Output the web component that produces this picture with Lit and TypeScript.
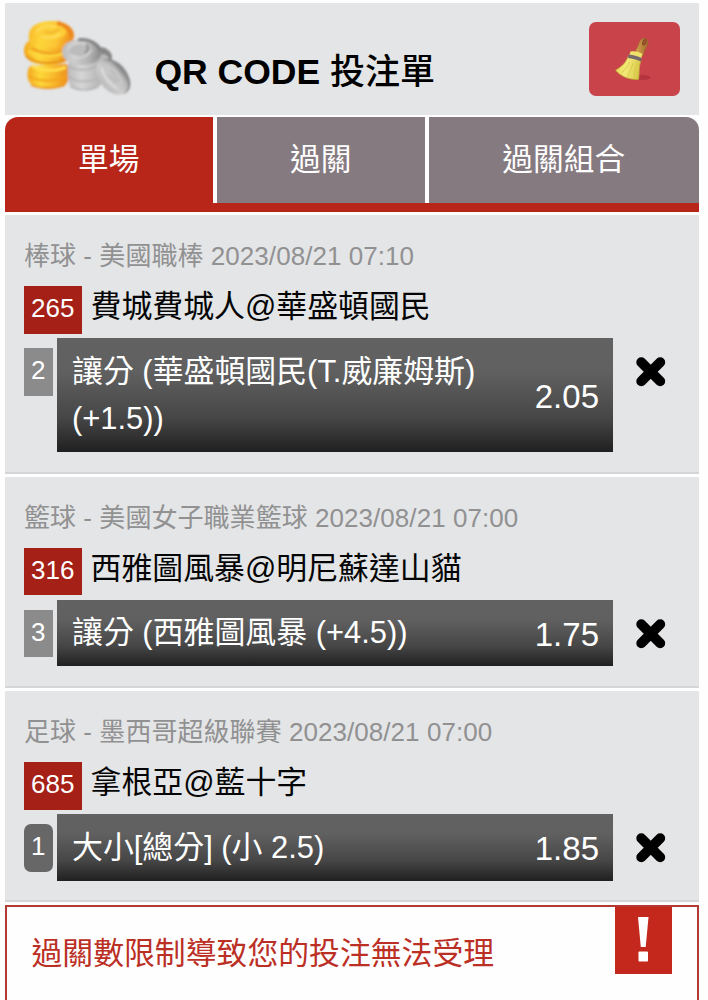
import { LitElement, html, css, nothing } from "lit";
import { customElement, property } from "lit/decorators.js";

interface Bet {
  league: string;
  code: string;
  teams: string;
  mark: string;
  rounded?: boolean;
  pick: string[];
  odds: string;
}

const BETS: Bet[] = [
  { league: "棒球 - 美國職棒 2023/08/21 07:10", code: "265", teams: "費城費城人@華盛頓國民", mark: "2", pick: ["讓分 (華盛頓國民(T.威廉姆斯)", "(+1.5))"], odds: "2.05" },
  { league: "籃球 - 美國女子職業籃球 2023/08/21 07:00", code: "316", teams: "西雅圖風暴@明尼蘇達山貓", mark: "3", pick: ["讓分 (西雅圖風暴 (+4.5))"], odds: "1.75" },
  { league: "足球 - 墨西哥超級聯賽 2023/08/21 07:00", code: "685", teams: "拿根亞@藍十字", mark: "1", rounded: true, pick: ["大小[總分] (小 2.5)"], odds: "1.85" },
];

const coins = html`<svg width="110" height="80" viewBox="0 0 110 80" aria-hidden="true">
  <defs>
    <linearGradient id="goldTop" x1="0" y1=".2" x2="1" y2=".3">
      <stop offset="0" stop-color="#f9b828"/><stop offset=".3" stop-color="#fdd53a"/><stop offset=".65" stop-color="#fbc634"/><stop offset="1" stop-color="#ee8a1a"/>
    </linearGradient>
    <linearGradient id="goldEdge" x1="0" y1="0" x2="1" y2="0">
      <stop offset="0" stop-color="#f4a61e"/><stop offset=".3" stop-color="#fdd83a"/><stop offset=".65" stop-color="#f8b62a"/><stop offset="1" stop-color="#ec8c1c"/>
    </linearGradient>
    <linearGradient id="silverTop" x1="0" y1=".3" x2="1" y2=".4">
      <stop offset="0" stop-color="#bdbdbd"/><stop offset=".35" stop-color="#cecece"/><stop offset=".7" stop-color="#b4b4b4"/><stop offset="1" stop-color="#8a8a8a"/>
    </linearGradient>
    <linearGradient id="silverEdge" x1="0" y1="0" x2="1" y2="0">
      <stop offset="0" stop-color="#bcbcbc"/><stop offset=".4" stop-color="#d6d6d6"/><stop offset="1" stop-color="#b2b2b2"/>
    </linearGradient>
    <linearGradient id="silverLean" x1="0" y1="0" x2="0" y2="1">
      <stop offset="0" stop-color="#8c8c8c"/><stop offset=".2" stop-color="#b6b6b6"/><stop offset=".6" stop-color="#cecece"/><stop offset="1" stop-color="#bababa"/>
    </linearGradient>
    <filter id="soft" x="-10%" y="-10%" width="120%" height="120%"><feGaussianBlur stdDeviation=".8"/></filter>
  </defs>
  <g filter="url(#soft)">
    <path d="M7 47C3 52 4 62 8 65c9 5 25 5 34 1 5-4 5-15 2-21z" fill="url(#goldEdge)"/>
    <path d="M6 57c9 6 28 6 38 0" fill="none" stroke="#f2a41e" stroke-width="2"/>
    <path d="M9 47c8 5 25 6 34 1" fill="none" stroke="#ffe04e" stroke-width="3"/>
    <path d="M8 66c9 4 25 4 34 0" fill="none" stroke="#ec941c" stroke-width="1.800"/>
    <path d="M7 21C1 24-1 33 3 38c4 6 12 8 22 8 9 0 17-2 21-6l3-18z" fill="url(#goldEdge)"/>
    <path d="M3 37c10 9 30 9 43 2" fill="none" stroke="#e68d16" stroke-width="2"/>
    <path d="M9 29c10 7 27 7 38 0" fill="none" stroke="#ef9c20" stroke-width="2.200"/>
    <path d="M5 32c9 6 25 7 36 2" fill="none" stroke="#ffda3f" stroke-width="2"/>
    <path d="M6 15C7 6 17 2 29 2s22 6 22 14c0 4-2 8-6 10-9 4-26 4-34 0-4-2-6-6-5-11z" fill="url(#goldTop)"/>
    <path d="M34 4c9 2 15 7 14 13" fill="none" stroke="#ee861c" stroke-width="4"/>
    <ellipse cx="27" cy="13" rx="16" ry="7.500" fill="#fccd39"/>
    <path d="M14 13c3-6 13-7 19-5M18 17c6 3 15 2 19-3" fill="none" stroke="#ffe465" stroke-width="1.500"/>
    <path d="M22 14c3-3 6 2 9-1s5-1 6-3" fill="none" stroke="#efad28" stroke-width="1.500"/>
    <path d="M46 42c-2 7-2 18 1 24 8 6 22 6 30 1 3-6 2-18-1-24z" fill="url(#silverEdge)"/>
    <path d="M45 47c8 5 20 5 29 0M46 58c9 6 20 5 30 1" fill="none" stroke="#b4b4b4" stroke-width="1.800"/>
    <path d="M47 67c8 5 20 5 28 1" fill="none" stroke="#b2b2b2" stroke-width="1.500"/>
    <ellipse cx="81" cy="35.500" rx="9" ry="6" fill="#858585" transform="rotate(35 81 35.5)"/>
    <ellipse cx="78" cy="40" rx="8" ry="5" fill="#b9b9b9"/>
    <path d="M39 33c0-8 9-13 20-13 12 0 20 6 20 13-1 8-9 13-20 13-11-1-19-4-20-13z" fill="url(#silverTop)"/>
    <path d="M55 21c11-2 20 4 22 11" fill="none" stroke="#828282" stroke-width="3"/>
    <ellipse cx="58" cy="31" rx="12" ry="6" fill="#bcbcbc"/>
    <path d="M45 31c2-7 12-8 18-5M48 37c8 3 17 1 19-5" fill="none" stroke="#d8d8d8" stroke-width="1.500"/>
    <path d="M63 26c3 2 3 5-1 8" fill="none" stroke="#929292" stroke-width="2.500"/>
    <ellipse cx="91.500" cy="57.500" rx="20" ry="12.500" fill="#858585" transform="rotate(52 91.5 57.5)"/>
    <ellipse cx="89" cy="58.500" rx="20" ry="12.500" fill="url(#silverLean)" transform="rotate(50 89 58.5)"/>
    <ellipse cx="89.500" cy="57" rx="14" ry="7" fill="#c7c7c7" transform="rotate(50 89.5 57)"/>
    <path d="M79 49c1 8 8 17 15 20" fill="none" stroke="#dedede" stroke-width="2"/>
    <path d="M88 50l8 13M86 56l7 7" stroke="#b3b3b3" stroke-width="1.300"/>
  </g>
</svg>`;

const broom = html`<svg width="40" height="48" viewBox="0 0 40 48" aria-hidden="true">
  <defs>
    <linearGradient id="straw" x1="0" y1="0" x2="1" y2=".2">
      <stop offset="0" stop-color="#e6d850"/><stop offset=".5" stop-color="#f3e978"/><stop offset="1" stop-color="#d9c94a"/>
    </linearGradient>
    <linearGradient id="wood" x1="0" y1="0" x2="1" y2="0">
      <stop offset="0" stop-color="#d8a450"/><stop offset="1" stop-color="#a36b30"/>
    </linearGradient>
    <filter id="blend"><feGaussianBlur stdDeviation=".35"/></filter>
  </defs>
  <g filter="url(#blend)">
  <ellipse cx="26" cy="42.500" rx="11" ry="2.800" fill="#a52c36" opacity=".55"/>
  <path d="M21 18.500c.5-4.500 3-6.500 3.700-9.500C25.500 5.500 28 3 30.500 3.300c3 .4 4.300 3.400 3 6.400-1.400 3.200-3.400 6.400-4.300 11z" fill="url(#wood)" stroke="#9a6228" stroke-width=".6"/>
  <ellipse cx="30.300" cy="7.300" rx="1.500" ry="2.900" fill="#a95038" stroke="#7d4a1e" stroke-width=".9" transform="rotate(22 30.3 7.3)"/>
  <path d="M16.500 16.600c4-.8 8.500.3 12 2.400l-1.700 6-11.800-4z" fill="#eee06a"/>
  <path d="M14.300 21c-2.400 6.700-6.300 10.400-12.600 14.300C5.700 40.400 14.100 45 24.500 44.600c1.200-6.400-.2-12 2.500-19.300z" fill="url(#straw)" stroke="#c0a93a" stroke-width=".8"/>
  <path d="M15.500 27c-2 5-5 8-8.300 11M19 28c-2 6-3.300 9-5.500 13.700M22.500 28.500c-1.500 6-1.500 10-2.500 15.300" fill="none" stroke="#d9c648" stroke-width=".9"/>
  <path d="M14.700 19.400c4.600.4 8.900 1.700 13 3.600l-.8 3.500c-4-2-8.500-3.300-13-3.600z" fill="#75696c"/>
  </g>
</svg>`;

@customElement("bet-item")
export class BetItem extends LitElement {
  @property({ attribute: false }) bet!: Bet;

  static styles = css`
    :host { display: block; }
    .item { box-sizing: border-box; background: #e4e5e7; border-bottom: 2px solid #d4d5d6; padding: 22px 0 19.700px 19px; }
    .league { font-size: 26px; line-height: 38px; height: 38px; color: #919192; white-space: nowrap; letter-spacing: 0.050px; }
    .match { display: flex; align-items: flex-start; gap: 9px; margin-top: 11px; height: 47.500px; }
    .code { flex: none; width: 57.500px; height: 47.500px; line-height: 44px; text-align: center; font-size: 26px; color: #fff; background: #a52017; }
    .teams { font-size: 30.900px; line-height: 42px; color: #050505; white-space: nowrap; }
    .row { display: flex; align-items: flex-start; margin-top: 4.500px; }
    .mark { flex: none; width: 28.500px; height: 47.500px; margin: 10px 4.500px 0 0; line-height: 44px; text-align: center; font-size: 26px; color: #fff; background: #8b8b8b; }
    .rounded { background: #676767; border-radius: 7px; }
    .pick { box-sizing: border-box; flex: none; width: 556px; display: flex; align-items: center; justify-content: space-between; padding: 9.500px 14px 9.500px 15px; color: #fff; background: linear-gradient(#626262 0%, #606060 30%, #464646 70%, #202020 100%); }
    .text { font-size: 30.900px; line-height: 47.600px; white-space: nowrap; }
    .line { height: 47.600px; }
    .odds { font-size: 33px; line-height: 40px; padding-top: 3px; }
    .remove { margin: 18px 0 0 22px; width: 32px; height: 32px; }
    .remove svg { display: block; }
  `;

  render() {
    const b = this.bet;
    if (!b) return nothing;
    return html`<section class="item">
      <div class="league">${b.league}</div>
      <div class="match"><span class="code">${b.code}</span><span class="teams">${b.teams}</span></div>
      <div class="row">
        <span class="mark ${b.rounded ? "rounded" : ""}">${b.mark}</span>
        <div class="pick">
          <div class="text">${b.pick.map((t) => html`<div class="line">${t}</div>`)}</div>
          <div class="odds">${b.odds}</div>
        </div>
        <div class="remove"><svg width="32" height="32" viewBox="0 0 32 32" aria-label="刪除">
          <path d="M6.300 6.300l18.900 18.900M25.200 6.300l-18.900 18.900" stroke="#000" stroke-width="10" stroke-linecap="round"/>
        </svg></div>
      </div>
    </section>`;
  }
}

@customElement("app-root")
export class AppRoot extends LitElement {
  static styles = css`
    :host { display: block; box-sizing: border-box; width: 708px; height: 1000px; overflow: hidden; padding: 2.500px 9.500px 0 5px; background: #fefefe; font-family: "Liberation Sans", "Noto Sans CJK TC", sans-serif; }
    .head { display: flex; align-items: flex-start; height: 112.500px; background: #e4e5e7; }
    .coins { margin: 16.500px 0 0 18px; width: 110px; height: 80px; }
    .title { margin: 43px 0 0 21.500px; font-size: 35.500px; line-height: 52px; font-weight: 700; color: #000; white-space: pre; }
    .cjk { font-weight: 500; font-size: 35px; }
    .clear { display: flex; align-items: center; justify-content: center; margin: 19px 19px 0 auto; width: 90.500px; height: 74.500px; border-radius: 7px; background: #c9434b; }
    .tabs { display: grid; grid-template-columns: 207.500px 207.500px 1fr; column-gap: 4.500px; margin-top: 2px; border-bottom: 9px solid #b72619; }
    .tab { height: 86px; line-height: 85px; text-align: center; font-size: 30.700px; color: #fff; background: #857a7f; }
    .tab.on { background: #b72619; border-top-left-radius: 13px; }
    .tab:last-child { border-top-right-radius: 13px; }
    .list { display: flex; flex-direction: column; gap: 3px; padding-top: 3px; }
    .alert { display: flex; align-items: flex-start; box-sizing: border-box; margin-top: 2.500px; height: 110px; border: 2px solid #b23a33; color: #bb2f25; background: #fefefe; padding: 0 24.500px 0 24.500px; }
    .msg { font-size: 30.850px; line-height: 44px; margin-top: 25.500px; white-space: nowrap; }
    .warn { margin-left: auto; width: 57px; height: 67px; background: #c4281c; }
    .warn svg { display: block; }
  `;

  render() {
    return html`
      <header class="head">
        <div class="coins">${coins}</div>
        <div class="title">QR CODE <span class="cjk">投注單</span></div>
        <div class="clear">${broom}</div>
      </header>
      <nav class="tabs">
        <div class="tab on">單場</div>
        <div class="tab">過關</div>
        <div class="tab">過關組合</div>
      </nav>
      <main class="list">${BETS.map((b) => html`<bet-item .bet=${b}></bet-item>`)}</main>
      <div class="alert">
        <div class="msg">過關數限制導致您的投注無法受理</div>
        <div class="warn"><svg width="57" height="67" viewBox="0 0 57 67" aria-label="警告">
          <path d="M23 10h10.500l-2.800 30h-4.900z" fill="#fff"/><rect x="23.500" y="44.500" width="9.500" height="10" rx=".8" fill="#fff"/>
        </svg></div>
      </div>`;
  }
}
